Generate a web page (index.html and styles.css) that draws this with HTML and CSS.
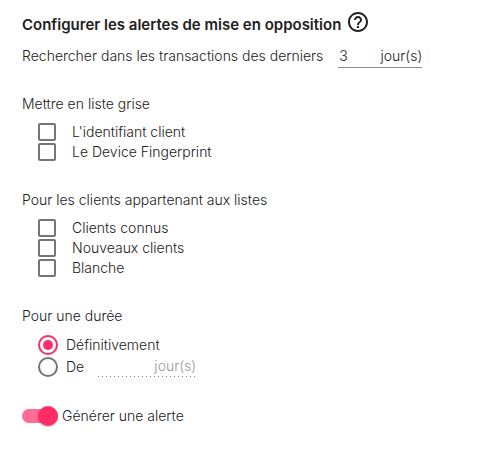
FILE: index.html
```html
<!DOCTYPE html>
<html lang="fr">
<head>
  <meta charset="utf-8">
  <meta name="viewport" content="width=device-width, initial-scale=1">
  <title>Configurer les alertes</title>
  <link rel="stylesheet" href="styles.css">
</head>
<body>
  <form class="settings">
    <header class="heading">
      <h1 class="title">Configurer les alertes de mise en opposition</h1>
      <button class="help" type="button" aria-label="Aide">
        <svg viewBox="0 0 24 24" width="24" height="24" fill="currentColor" aria-hidden="true">
          <path d="M11 18h2v-2h-2v2zm1-16C6.480 2 2 6.480 2 12s4.480 10 10 10 10-4.480 10-10S17.520 2 12 2zm0 18c-4.410 0-8-3.590-8-8s3.590-8 8-8 8 3.590 8 8-3.590 8-8 8zm0-14c-2.210 0-4 1.790-4 4h2c0-1.100.9-2 2-2s2 .9 2 2c0 2-3 1.750-3 5h2c0-2.250 3-2.500 3-5 0-2.210-1.790-4-4-4z"/>
        </svg>
      </button>
    </header>

    <div class="period">
      <label for="days">Rechercher dans les transactions des derniers</label>
      <span class="field">
        <input class="field-input" id="days" type="text" inputmode="numeric" value="3">
        <span>jour(s)</span>
      </span>
    </div>

    <fieldset class="group">
      <legend class="group-title">Mettre en liste grise</legend>
      <label class="option"><input class="checkbox" type="checkbox">L'identifiant client</label>
      <label class="option"><input class="checkbox" type="checkbox">Le Device Fingerprint</label>
    </fieldset>

    <fieldset class="group">
      <legend class="group-title">Pour les clients appartenant aux listes</legend>
      <label class="option"><input class="checkbox" type="checkbox">Clients connus</label>
      <label class="option"><input class="checkbox" type="checkbox">Nouveaux clients</label>
      <label class="option"><input class="checkbox" type="checkbox">Blanche</label>
    </fieldset>

    <fieldset class="group">
      <legend class="group-title">Pour une durée</legend>
      <label class="choice"><input class="radio" type="radio" name="duration" checked>Définitivement</label>
      <div class="limited">
        <label class="choice"><input class="radio" type="radio" name="duration">De</label>
        <span class="field field-disabled">
          <input class="field-input" type="text" aria-label="Nombre de jours" disabled>
          <span>jour(s)</span>
        </span>
      </div>
    </fieldset>

    <label class="toggle"><input class="switch" type="checkbox" role="switch" checked>Générer une alerte</label>
  </form>
</body>
</html>
```
FILE: styles.css
```css
* {
  box-sizing: border-box;
}

body {
  margin: 0;
  background: #fff;
  color: #212121;
  font: 300 14px/20px Inter, "Liberation Sans", sans-serif;
}

input,
button {
  margin: 0;
  color: inherit;
  font: inherit;
}

.settings {
  padding: 10px 22px;
}

.heading {
  display: flex;
  align-items: center;
  gap: 5px;
}

.title {
  margin: 0;
  padding-top: 6px;
  font-size: 15px;
  line-height: 18px;
  font-weight: 600;
}

.help {
  display: flex;
  padding: 0;
  border: 0;
  background: none;
}

.period {
  display: flex;
  align-items: center;
  gap: 15px;
  margin-top: 10px;
}

.field {
  display: flex;
  width: 84px;
  padding: 2px 0 1px 1px;
  border-bottom: 1px solid #8a8a8a;
}

.field-input {
  flex: 1;
  min-width: 0;
  height: 20px;
  padding: 0;
  border: 0;
  outline: 0;
  background: none;
}

.field-disabled {
  width: 98px;
  height: 21px;
  padding: 0;
  border: 0;
  background: repeating-linear-gradient(to right, #8a8a8a 0 1px, transparent 1px 4px) bottom / 100% 1px no-repeat;
  color: #9a9a9a;
}

.group {
  margin: 26px 0 28px;
  padding: 0;
  border: 0;
}

.group-title {
  padding: 0 0 8px;
}

.option,
.choice {
  display: flex;
  align-items: center;
  margin-left: 16px;
}

.option {
  gap: 16px;
}

.choice {
  gap: 8px;
  height: 22px;
}

.checkbox,
.radio {
  appearance: none;
  flex: none;
  border: 2px solid #757575;
}

.checkbox {
  width: 18px;
  height: 18px;
  border-radius: 2px;
}

.checkbox:checked {
  background: #ff2c68;
}

.radio {
  display: grid;
  place-items: center;
  width: 20px;
  height: 20px;
  border-radius: 50%;
}

.radio:checked {
  border-color: #ff2c68;
}

.radio:checked::before {
  content: "";
  width: 10px;
  height: 10px;
  border-radius: 50%;
  background: #ff2c68;
}

.limited {
  display: flex;
  gap: 14px;
  height: 22px;
}

.toggle {
  display: flex;
  align-items: center;
  gap: 4px;
}

.switch {
  appearance: none;
  display: flex;
  align-items: center;
  width: 36px;
  height: 14px;
  margin: 3px 0;
  border-radius: 7px;
  background: #bdbdbd;
}

.switch::before {
  content: "";
  flex: none;
  width: 20px;
  height: 20px;
  border-radius: 50%;
  background: #fafafa;
  box-shadow: 0 1px 2px rgba(0, 0, 0, 0.25);
}

.switch:checked {
  justify-content: flex-end;
  background: #ff6c96;
}

.switch:checked::before {
  background: #ff2c68;
}
```
